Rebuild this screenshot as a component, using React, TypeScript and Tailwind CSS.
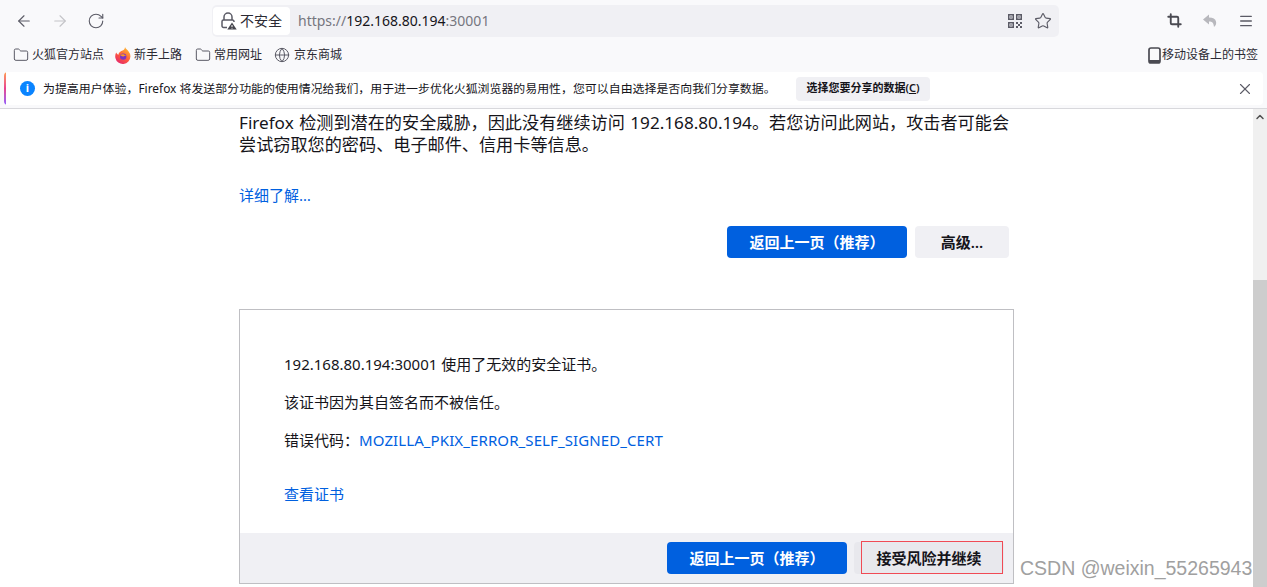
import React from 'react';
import { ArrowLeft, ArrowRight, RotateCw, Star, Menu, X, Crop, Folder, Globe, ChevronUp } from 'lucide-react';

const Bookmark: React.FC<{ icon: React.ReactNode; label: string }> = ({ icon, label }) => (
  <div className="flex items-center gap-[3px] text-[12px] text-[#2b2a33]">
    {icon}
    <span>{label}</span>
  </div>
);

const FoxIcon = () => (
  <svg width="16" height="17" viewBox="0 0 16 17">
    <defs>
      <linearGradient id="fox" x1="0.8" y1="0" x2="0.2" y2="1">
        <stop offset="0" stopColor="#ffc02e" />
        <stop offset="0.55" stopColor="#ff5a3c" />
        <stop offset="1" stopColor="#e3256f" />
      </linearGradient>
    </defs>
    <path d="M10 0c.5 2 2.5 2.5 3.6 4.4A7.6 7.6 0 1 1 1.2 5.6C2 7 2.6 7.5 3.4 7.8 3.6 5 6 4 7.6 3.4 9 2.8 10 2 10 0z" fill="url(#fox)" />
    <circle cx="8.2" cy="9.6" r="3.2" fill="#7a35c4" />
    <path d="M5 8c1.500-1 4-1.500 6.500 1-1.500-.6-2.500-.4-3 .4-1 .2-2.400-.4-3.500-1.400z" fill="#ff9a1f" />
  </svg>
);

// lock with the small warning triangle
const InsecureLock = () => (
  <svg width="17" height="18" viewBox="0 0 17 18" fill="none">
    <path d="M4 8V5a4 4 0 0 1 8 0v3" stroke="#5b5b66" strokeWidth="1.5" />
    <path d="M7 15.500H3.500a1.500 1.500 0 0 1-1.500-1.500V9.500A1.500 1.500 0 0 1 3.500 8h9A1.500 1.500 0 0 1 14 9.500v.5" stroke="#5b5b66" strokeWidth="1.5" />
    <path d="M12 10.500l4.700 7H7.300z" fill="#45454d" />
    <path d="M12 13v2.200M12 16v.6" stroke="#fff" strokeWidth="1" />
  </svg>
);

const QrIcon = () => (
  <svg width="16" height="16" viewBox="0 0 16 16" fill="#5b5b66">
    <path fillRule="evenodd" d="M1 1h6v6H1zM2.500 2.500v3h3v-3zM9 1h6v6H9zM10.500 2.500v3h3v-3zM1 9h6v6H1zM2.500 10.500v3h3v-3z" />
    <path d="M3.300 3.300h1.400v1.400H3.300zM11.300 3.300h1.400v1.400h-1.400zM3.300 11.300h1.400v1.400H3.300zM9 9h2v2H9zM13 9h2v2h-2zM11 11h2v2h-2zM9 13h2v2H9zM13 13h2v2h-2z" />
  </svg>
);

const UndoFilled = () => (
  <svg width="16" height="16" viewBox="0 0 16 16" fill="#b8b8bd">
    <path d="M7 1.500 1 6.500l6 5V8.500c3 0 4.600 1 5 5.500 2-1.500 2.500-3.500 2-5.500C13.500 6 11 4.600 7 4.500z" />
  </svg>
);

const PhoneIcon = () => (
  <svg width="13" height="17" viewBox="0 0 13 17" fill="none" className="mr-[-2px]">
    <rect x="1" y="1" width="11" height="15" rx="2" stroke="#4a4a52" strokeWidth="1.7" />
    <path d="M1 13h11v1a2 2 0 0 1-2 2H3a2 2 0 0 1-2-2z" fill="#4a4a52" />
  </svg>
);

const App: React.FC = () => {
  return (
    <div className="w-[1267px] h-[587px] overflow-hidden flex flex-col bg-white relative font-['Noto_Sans','Noto_Sans_CJK_SC',sans-serif]">
      {/* browser chrome */}
      <div className="h-[109px] shrink-0 bg-[#f9f9fb] border-b border-[#d8d8dc] flex flex-col">
        <div className="h-[40px] flex items-center pt-[1px]">
          <div className="w-[212px] pl-[15px] flex items-center gap-[18px] shrink-0">
            <ArrowLeft size={18} className="text-[#5b5b66]" strokeWidth={1.5} />
            <ArrowRight size={18} className="text-[#c4c4c8]" strokeWidth={1.5} />
            <RotateCw size={18} className="text-[#5b5b66]" strokeWidth={1.5} />
          </div>
          <div className="w-[847px] h-[32px] rounded-[5px] bg-[#f0f0f4] flex items-center pr-[7px] shrink-0">
            <div className="h-[28px] w-[77px] ml-[1px] bg-white rounded-[4px] flex items-center gap-[3px] pl-[7px] text-[14px] text-[#2b2a33]">
              <InsecureLock />
              <span>不安全</span>
            </div>
            <div className="ml-[8px] text-[14px] text-[#76767f] flex-1">
              https://<span className="text-[#15141a]">192.168.80.194</span>:30001
            </div>
            <QrIcon />
            <Star size={18} className="ml-[11px] text-[#5b5b66]" strokeWidth={1.5} />
          </div>
          <div className="flex-1 flex items-center justify-end pr-[13px] gap-[20px]">
            <Crop size={15} className="text-[#4a4a52]" strokeWidth={3} />
            <UndoFilled />
            <Menu size={16} className="text-[#5b5b66]" strokeWidth={2} />
          </div>
        </div>
        <div className="h-[30px] flex items-center pl-[13px] pr-[9px]">
          <Bookmark icon={<Folder size={16} className="text-[#5b5b66]" strokeWidth={1.5} />} label="火狐官方站点" />
          <div className="ml-[11px]">
            <Bookmark icon={<FoxIcon />} label="新手上路" />
          </div>
          <div className="ml-[13px]">
            <Bookmark icon={<Folder size={16} className="text-[#5b5b66]" strokeWidth={1.5} />} label="常用网址" />
          </div>
          <div className="ml-[12px] flex items-center gap-[4px] text-[12px] text-[#2b2a33]">
            <Globe size={16} className="text-[#5b5b66]" strokeWidth={1.5} />
            <span>京东商城</span>
          </div>
          <div className="ml-auto">
            <Bookmark icon={<PhoneIcon />} label="移动设备上的书签" />
          </div>
        </div>
        <div className="h-[33px] mx-[4px] mt-[2px] bg-white rounded-[4px] flex items-center overflow-hidden">
          <div className="w-[2px] h-full bg-gradient-to-b from-[#ff9a4a] via-[#e8408f] to-[#9059ff]" />
          <div className="ml-[14px] w-[15px] h-[15px] rounded-full bg-[#0a84ff] text-white text-[11px] font-bold flex items-center justify-center">i</div>
          <span className="ml-[8px] text-[11.930px] text-[#15141a]">为提高用户体验，Firefox 将发送部分功能的使用情况给我们，用于进一步优化火狐浏览器的易用性，您可以自由选择是否向我们分享数据。</span>
          <div className="absolute left-[796px] h-[24px] w-[134px] bg-[#f0f0f4] rounded-[4px] flex items-center justify-center text-[11px] font-semibold text-[#15141a]">
            <span>选择您要分享的数据(<span className="underline">C</span>)</span>
          </div>
          <X size={18} className="ml-auto mr-[9px] text-[#5b5b66]" strokeWidth={1.5} />
        </div>
      </div>

      {/* page */}
      <div className="flex-1 flex min-h-0">
        <div className="flex-1 min-w-0 pl-[239px]">
          <div className="w-[775px]">
            <p className="mt-[3px] text-[17.150px] leading-[22px] [word-spacing:1px] text-[#15141a] w-[775px]">Firefox 检测到潜在的安全威胁，因此没有继续访问 192.168.80.194。若您访问此网站，攻击者可能会尝试窃取您的密码、电子邮件、信用卡等信息。</p>
            <div className="mt-[29px] text-[15px] leading-[20px] text-[#0060df]">详细了解…</div>
            <div className="mt-[21px] pr-[5px] flex justify-end gap-[8px]">
              <div className="w-[180px] h-[32px] rounded-[4px] bg-[#0060df] text-white text-[15px] font-semibold flex items-center justify-center">返回上一页（推荐）</div>
              <div className="w-[94px] h-[32px] rounded-[4px] bg-[#f0f0f4] text-[#15141a] text-[15px] font-semibold flex items-center justify-center">高级…</div>
            </div>
            <div className="mt-[51px] h-[275px] border border-[#bfbfc3] flex flex-col">
              <div className="flex-1 pl-[44px] pt-[44px] text-[15px] text-[#15141a]">
                <p className="leading-[20px]">192.168.80.194:30001 使用了无效的安全证书。</p>
                <p className="mt-[18px] leading-[20px]">该证书因为其自签名而不被信任。</p>
                <p className="mt-[18px] leading-[20px]">错误代码：<span className="text-[#0060df] tracking-[0.1px]">MOZILLA_PKIX_ERROR_SELF_SIGNED_CERT</span></p>
                <p className="mt-[34px] leading-[20px] text-[#0060df]">查看证书</p>
              </div>
              <div className="h-[50px] bg-[#f0f0f4] flex items-center justify-end pr-[9px] gap-[7px] shrink-0">
                <div className="w-[180px] h-[32px] rounded-[4px] bg-[#0060df] text-white text-[15px] font-semibold flex items-center justify-center">返回上一页（推荐）</div>
                <div className="relative w-[150px] h-[32px] rounded-[4px] bg-[#e8e8ed] text-[#15141a] text-[15px] font-semibold flex items-center justify-center">
                  接受风险并继续
                  {/* red annotation box drawn on the screenshot */}
                  <div className="absolute left-[7px] right-[1px] top-[-1px] bottom-0 border border-[#f04a55]" />
                </div>
              </div>
            </div>
          </div>
        </div>
        <div className="w-[14px] shrink-0 bg-[#f0f0f0] flex flex-col">
          <div className="h-[171px] flex justify-center pt-[2px]">
            <ChevronUp size={12} className="text-[#505050]" strokeWidth={3} />
          </div>
          <div className="flex-1 bg-[#cdcdcd]" />
        </div>
      </div>

      {/* watermark */}
      <span className="absolute left-[1020px] top-[557px] text-[19.500px] leading-[22px] text-[#a0a0a0] font-['Liberation_Sans',sans-serif]">CSDN @weixin_55265943</span>
    </div>
  );
};

export default App;
